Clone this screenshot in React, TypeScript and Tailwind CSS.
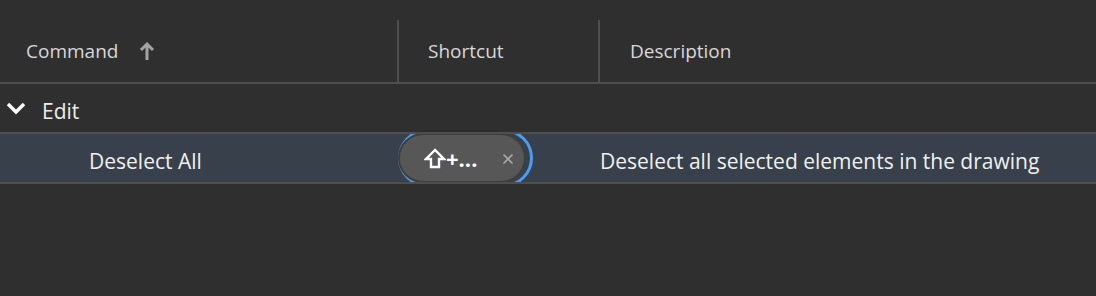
import React from "react";

const font = { fontFamily: '"Open Sans", "Noto Sans", sans-serif' };

function SortArrow() {
  return (
    <svg width="16" height="20" viewBox="0 0 16 20" className="text-[#a3a3a3]">
      <path d="M8 19V3M2 9l6-6 6 6" fill="none" stroke="currentColor" strokeWidth="3" strokeLinejoin="miter" />
    </svg>
  );
}

function Chevron() {
  return (
    <svg width="20" height="14" viewBox="0 0 20 14" className="text-white">
      <path d="M2 3l8 8 8-8" fill="none" stroke="currentColor" strokeWidth="3.4" />
    </svg>
  );
}

function ShiftIcon() {
  return (
    <svg width="22" height="21" viewBox="0 0 22 21" className="text-white">
      <path d="M11 2L2 11h5v8h8v-8h5z" fill="none" stroke="currentColor" strokeWidth="2.4" strokeLinejoin="miter" />
    </svg>
  );
}

function ClearIcon() {
  return (
    <svg width="12" height="12" viewBox="0 0 12 12" className="text-[#a9a9a9]">
      <path d="M1.5 1.5l9 9M10.5 1.5l-9 9" fill="none" stroke="currentColor" strokeWidth="1.6" />
    </svg>
  );
}

export default function App() {
  return (
    <div className="h-[296px] w-[1096px] overflow-hidden bg-[#2f2f2f] text-[21px]" style={font}>
      {/* header */}
      <div className="grid h-[84px] grid-cols-[397px_201px_1fr] border-b-2 border-[#4e4e4e] text-[19px] font-medium text-[#d8d8d8]">
        <div className="flex items-center gap-[21px] pl-[26px] pt-[20px]">
          <span>Command</span>
          <SortArrow />
        </div>
        <div className="mt-[20px] flex items-center border-l-2 border-[#4e4e4e] pl-[29px]">
          Shortcut
        </div>
        <div className="mt-[20px] flex items-center border-l-2 border-[#4e4e4e] pl-[30px]">
          Description
        </div>
      </div>

      {/* group row */}
      <div className="flex h-[50px] items-center border-b-2 border-[#4e4e4e] pl-[6px] font-medium text-[#ececec]">
        <Chevron />
        <span className="ml-[16px] pt-[8px]">Edit</span>
      </div>

      {/* selected command row */}
      <div className="grid h-[50px] grid-cols-[398px_202px_1fr] border-b-2 border-[#4e4e4e] bg-[#37404b] font-medium text-[#f0f0f0]">
        <div className="flex items-center pl-[89px] pt-[8px]">Deselect All</div>
        <div className="relative overflow-hidden">
          <div className="absolute left-0 top-[-5px] h-[58px] w-[135px] rounded-full border-[3px] border-[#4c9cf0]" />
          <div className="absolute left-0 top-[-1px] flex h-[50px] w-[128px] items-center rounded-full border-2 border-[#3e3e3e] bg-[#575757] pl-[24px] pr-[10px]">
            <ShiftIcon />
            <span className="text-[22px] font-bold leading-none text-white">+...</span>
            <span className="ml-auto pt-[2px]">
              <ClearIcon />
            </span>
          </div>
        </div>
        <div className="flex items-center pt-[8px]">Deselect all selected elements in the drawing</div>
      </div>
    </div>
  );
}
